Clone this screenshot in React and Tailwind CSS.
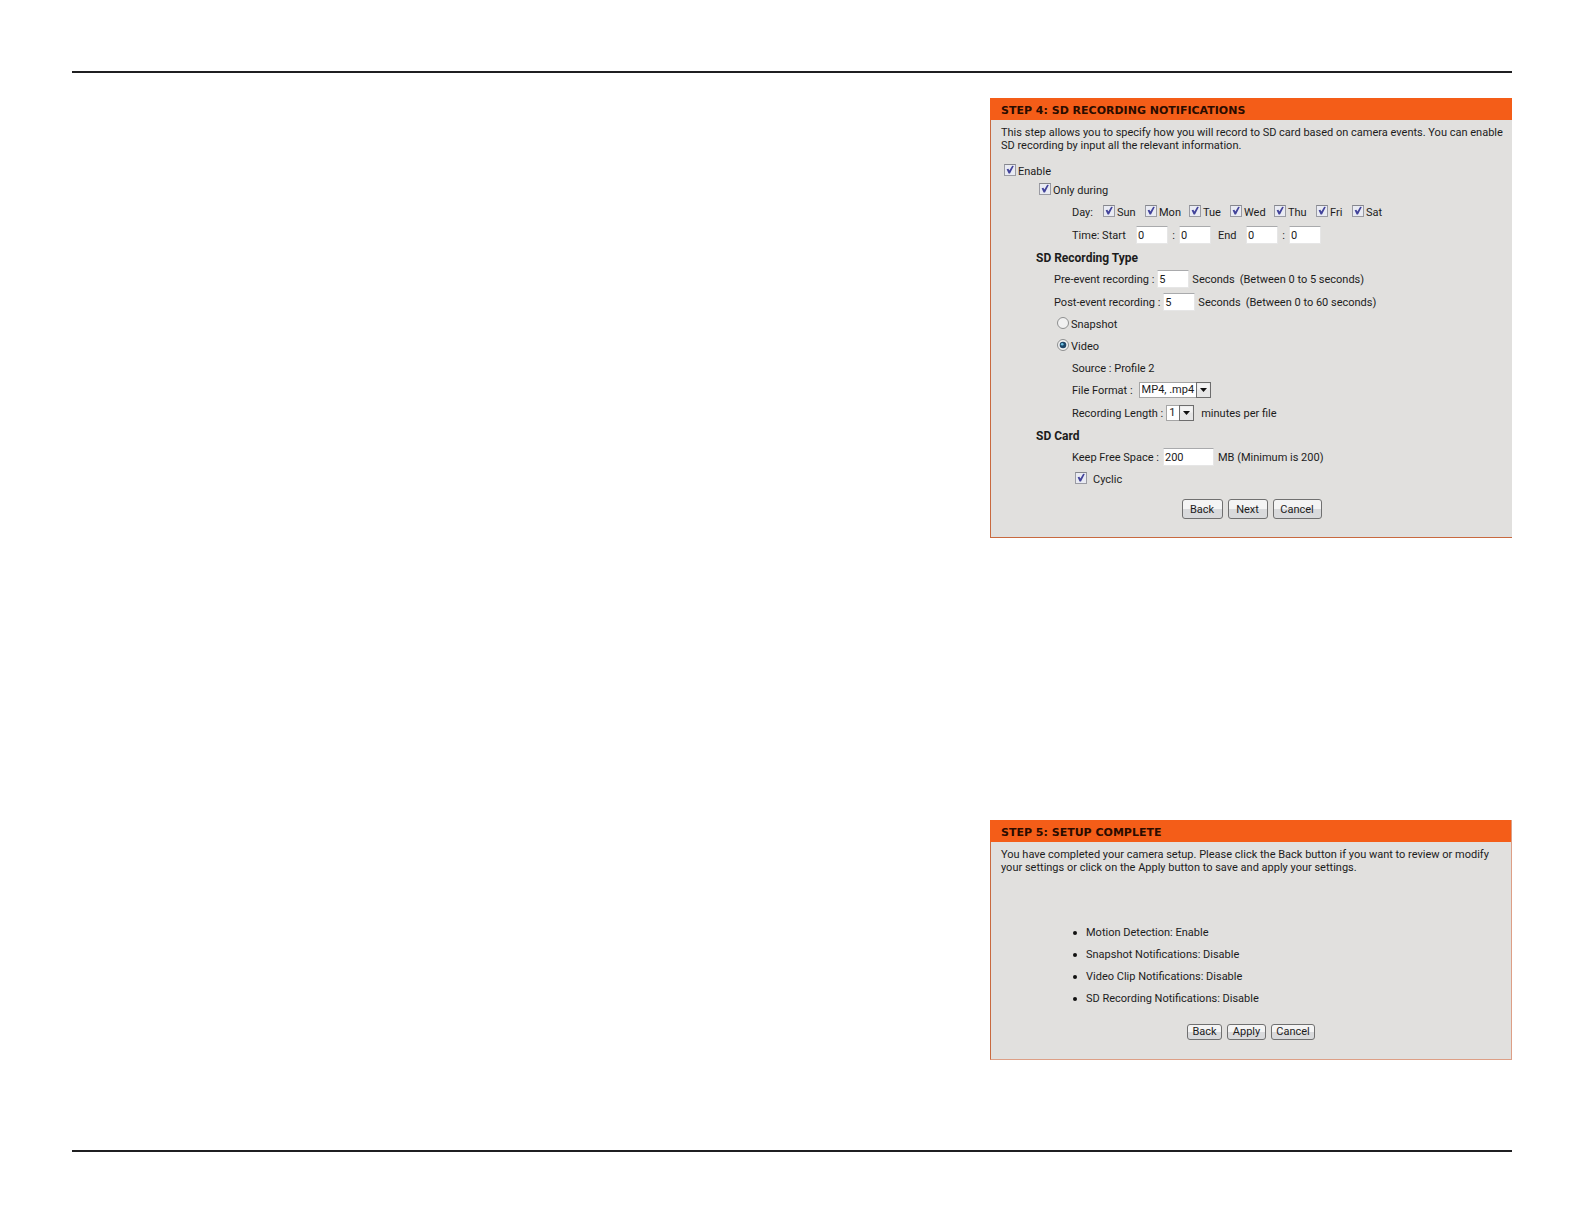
import React, { useState } from 'react';

const DAYS = ['Sun', 'Mon', 'Tue', 'Wed', 'Thu', 'Fri', 'Sat'];

const SUMMARY = [
  'Motion Detection: Enable',
  'Snapshot Notifications: Disable',
  'Video Clip Notifications: Disable',
  'SD Recording Notifications: Disable',
];

const Panel = ({ title, className = '', children }) => (
  <section className={`w-full max-w-[522px] border-l border-b bg-[#e1e0de] ${className}`}>
    <h2 className="-ml-px flex h-[22px] items-center bg-[#f45d18] pl-[11px] pt-1 font-['DejaVu_Sans'] text-[11px] font-bold text-[#2a0c00]">{title}</h2>
    {children}
  </section>
);

const Row = ({ className = '', children }) => (
  <div className={`flex h-[22px] items-center pt-[2px] ${className}`}>{children}</div>
);

const Check = ({ label, gap = 'gap-[2px]' }) => (
  <label className={`flex items-center ${gap}`}>
    <span className="mb-1 grid">
      <input type="checkbox" defaultChecked className="peer col-start-1 row-start-1 size-3 appearance-none border border-[#9a9ba3] border-t-[#85868c] bg-[#e9ebf3]" />
      <svg viewBox="0 0 12 12" className="pointer-events-none invisible col-start-1 row-start-1 size-3 peer-checked:visible">
        <path d="M2.6 5.2 L4.4 4.8 L5.4 6.4 L8.2 1.8 L9.8 2 L6 9.6 L4.6 9.6 Z" fill="#42439a" />
      </svg>
    </span>
    {label}
  </label>
);

const Radio = ({ label, value, current, onPick }) => (
  <label className="flex items-center gap-[2px]">
    <span className="mb-1 grid">
      <input type="radio" name="type" checked={current === value} onChange={() => onPick(value)} className="peer col-start-1 row-start-1 size-3 appearance-none rounded-full border border-[#8e8f8f] bg-[#f1f1f1]" />
      <svg viewBox="0 0 12 12" className="pointer-events-none invisible col-start-1 row-start-1 size-3 peer-checked:visible">
        <circle cx="6" cy="6" r="3.3" fill="#1d4668" />
        <circle cx="5.2" cy="5.2" r="1.3" fill="#6fc3e6" />
      </svg>
    </span>
    {label}
  </label>
);

const Field = ({ value, label, id, className = 'w-8' }) => (
  <input id={id} type="text" defaultValue={value} aria-label={label} className={`mb-[2px] h-[18px] border border-[#e6e6e6] border-t-[#a9aaac] bg-white px-px text-[#1a1a1a] ${className}`} />
);

const Select = ({ id, options, className }) => (
  <span className={`mb-[2px] grid h-4 ${className}`}>
    <select id={id} className="col-start-1 row-start-1 h-4 w-full appearance-none border border-[#a5a5a5] bg-white pl-[2px] leading-[14px]">
      {options.map(o => <option key={o}>{o}</option>)}
    </select>
    <svg viewBox="0 0 15 16" className="pointer-events-none col-start-1 row-start-1 h-4 w-[15px] justify-self-end">
      <rect x="0.5" y="0.5" width="14" height="15" fill="#e6e6e6" stroke="#6d6d6d" />
      <rect x="1.5" y="1.5" width="12" height="6" fill="#f4f4f4" />
      <path d="M4 6 H11 L7.5 10 Z" fill="#111" />
    </svg>
  </span>
);

const Button = ({ className, children }) => (
  <button type="button" className={`rounded-[3px] border border-[#707070] bg-linear-to-b from-[#f4f4f4] from-50% to-[#d9dadc] to-50% text-center ${className}`}>{children}</button>
);

const RecordingStep = () => {
  const [type, setType] = useState('video');

  return (
    <Panel title="STEP 4: SD RECORDING NOTIFICATIONS" className="mt-[25px] border-[#c8693f]">
      <form className="pb-[18px]">
        <p className="pl-[10px] pr-1 pt-[6px] leading-[13px]">
          This step allows you to specify how you will record to SD card based on camera events. You can enable SD recording by input all the relevant information.
        </p>
        <Row className="mt-2 pl-[13px]"><Check label="Enable" /></Row>
        <div className="-mt-[3px] pl-[48px]"><Row><Check label="Only during" /></Row></div>

        <div className="pl-[81px]">
          <Row>
            <span className="w-[31px]">Day:</span>
            <div className="grid grid-cols-[42px_44px_41px_44px_42px_36px_auto]">
              {DAYS.map(d => <Check key={d} label={d} />)}
            </div>
          </Row>
          <Row className="mt-px">
            <span className="w-16">Time: Start</span>
            <Field value="0" label="Start hour" />
            <span className="w-[11px] text-center">:</span>
            <Field value="0" label="Start minute" />
            <span className="w-[35px] pl-[7px]">End</span>
            <Field value="0" label="End hour" />
            <span className="w-[11px] text-center">:</span>
            <Field value="0" label="End minute" />
          </Row>
        </div>

        <Row className="pl-[45px]"><h3 className="text-xs font-bold">SD Recording Type</h3></Row>
        <div className="pl-[63px]">
          <Row className="gap-[3px]">
            <label htmlFor="pre">Pre-event recording :</label>
            <Field id="pre" value="5" />
            <span>Seconds</span>
            <span className="pl-[2px]">(Between 0 to 5 seconds)</span>
          </Row>
          <Row className="mt-px gap-[3px]">
            <label htmlFor="post">Post-event recording :</label>
            <Field id="post" value="5" />
            <span>Seconds</span>
            <span className="pl-[2px]">(Between 0 to 60 seconds)</span>
          </Row>
          <Row className="pl-[3px]"><Radio label="Snapshot" value="snapshot" current={type} onPick={setType} /></Row>
          <Row className="pl-[3px]"><Radio label="Video" value="video" current={type} onPick={setType} /></Row>
        </div>
        <div className="pl-[81px]">
          <Row>Source : Profile 2</Row>
          <Row className="gap-[6px]">
            <label htmlFor="format">File Format :</label>
            <Select id="format" options={['MP4, .mp4']} className="w-[72px]" />
          </Row>
          <Row className="mt-px gap-[3px]">
            <label htmlFor="length">Recording Length :</label>
            <Select id="length" options={['1', '2', '3']} className="w-7" />
            <span className="pl-1">minutes per file</span>
          </Row>
        </div>

        <Row className="pl-[45px]"><h3 className="text-xs font-bold">SD Card</h3></Row>
        <div className="pl-[81px]">
          <Row className="gap-1">
            <label htmlFor="space">Keep Free Space :</label>
            <Field id="space" value="200" className="w-[51px]" />
            <span>MB (Minimum is 200)</span>
          </Row>
          <Row className="pl-[3px]"><Check label="Cyclic" gap="gap-[6px]" /></Row>
        </div>
        <div className="mt-[9px] flex justify-center gap-[5px]">
          <Button className="h-5 w-[41px] pt-[2px]">Back</Button>
          <Button className="h-5 w-10 pt-[2px]">Next</Button>
          <Button className="h-5 w-[49px] pt-[2px]">Cancel</Button>
        </div>
      </form>
    </Panel>
  );
};

const CompleteStep = () => (
  <Panel title="STEP 5: SETUP COMPLETE" className="mt-[282px] border-r border-l-[#c8693f] border-r-[#dd9f86] border-b-[#dd9f86]">
    <p className="pl-[10px] pr-1 pt-[6px] leading-[13px]">
      You have completed your camera setup. Please click the Back button if you want to review or modify <br className="max-xl:hidden" />
      your settings or click on the Apply button to save and apply your settings.
    </p>
    <ul className="mt-12 pl-[82px]">
      {SUMMARY.map(s => (
        <li key={s} className="flex h-[22px] items-center gap-[9px]">
          <span className="size-1 rounded-full bg-[#111]" />
          {s}
        </li>
      ))}
    </ul>
    <div className="mt-[14px] flex justify-center gap-[5px] pb-[19px]">
      <Button className="h-4 w-[35px] leading-[14px]">Back</Button>
      <Button className="h-4 w-[39px] leading-[14px]">Apply</Button>
      <Button className="h-4 w-11 leading-[14px]">Cancel</Button>
    </div>
  </Panel>
);

export default function App() {
  return (
    <div className="min-h-screen bg-white px-[72px] py-[71px] font-[Roboto,sans-serif] text-[11px] text-[#1c1c1c]">
      <main className="flex flex-col items-end border-y-2 border-[#1f1f21] pb-[90px]">
        <RecordingStep />
        <CompleteStep />
      </main>
    </div>
  );
}
